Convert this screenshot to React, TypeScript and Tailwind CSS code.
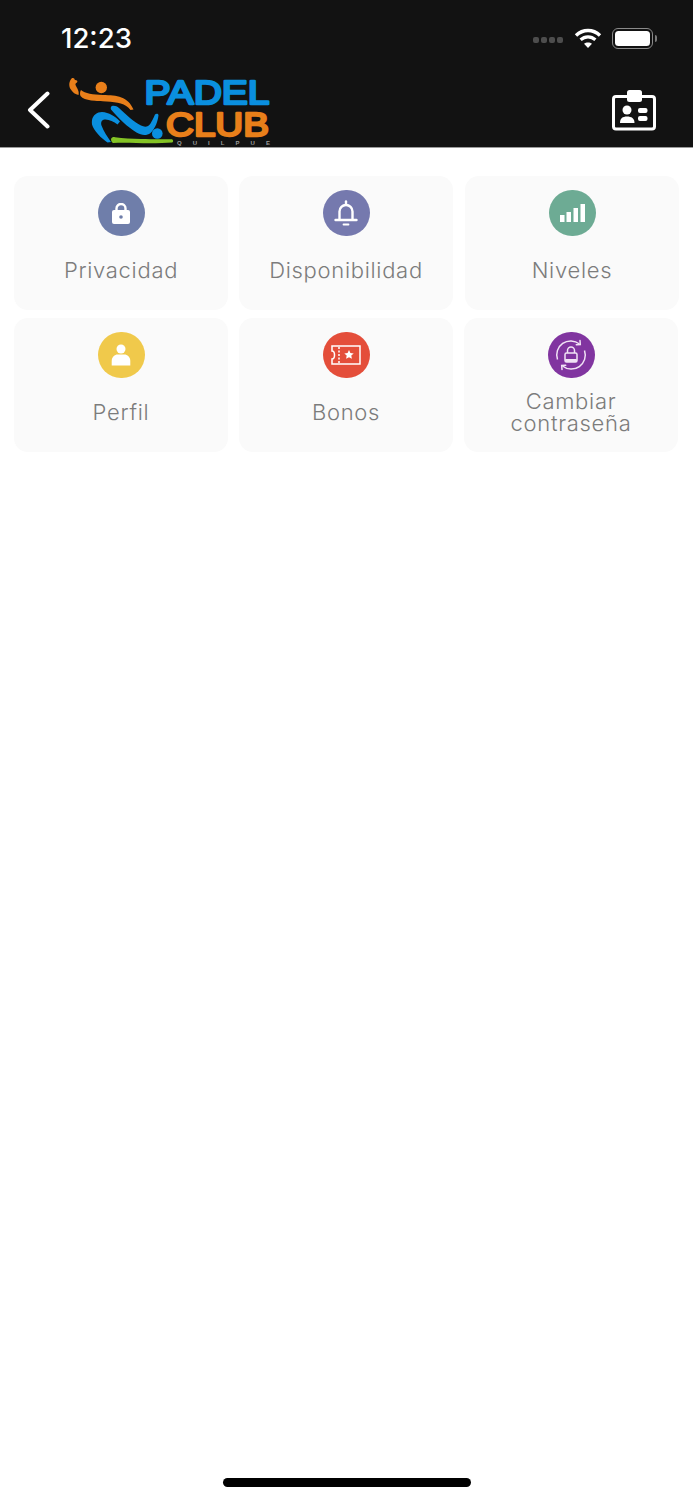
import type { ReactNode } from "react";

function Wifi() {
  return (
    <svg width="28" height="22" viewBox="0 0 28 22" fill="none" stroke="#fff" strokeLinecap="butt">
      <path d="M2 8.500C9 1.800 19 1.800 26 8.500" strokeWidth="3.400" />
      <path d="M6.600 12.800C11 8.800 17 8.800 21.400 12.800" strokeWidth="3.200" />
      <path d="M14 21l-4-4.200c2.200-1.900 5.800-1.900 8 0z" fill="#fff" stroke="none" />
    </svg>
  );
}

function Battery() {
  return (
    <div className="flex items-center gap-[2px]">
      <div className="flex h-[21px] w-[41px] rounded-[6px] border border-[#8a8a8a] p-[2px]">
        <div className="flex-1 rounded-[3.5px] bg-white" />
      </div>
      <div className="h-[7px] w-[2px] rounded-r-sm bg-[#7a7a7a]" />
    </div>
  );
}

function StatusBar() {
  return (
    <div className="flex h-[76px] items-start justify-between pl-[61px] pr-[36px] pt-[17px]">
      <span className="font-['Inter',sans-serif] text-[27.500px] leading-[42px] font-medium text-white">12:23</span>
      <div className="flex items-center pt-[10px]">
        <div className="mt-[3px] mr-[11px] flex gap-[2px]">
          {[0, 1, 2, 3].map((i) => (
            <div key={i} className="h-[6px] w-[6px] rounded-[2px] bg-[#4d4d4d]" />
          ))}
        </div>
        <Wifi />
        <div className="ml-[10px]">
          <Battery />
        </div>
      </div>
    </div>
  );
}

function Logo() {
  return (
    <svg className="overflow-visible" width="210" height="70" viewBox="65 76 210 70" fontFamily="'Liberation Sans', sans-serif">
      <path d="M72 78c2-.5 3 .7 2.700 2 2-.2 3.500 1 2.300 2.500-1.300.6-2.200 1.500-1 3.500 1.300 2.500 3.500 5.500 2.500 9-3-.5-6-2.500-8-6-2-3.500-1.500-8 1.500-11z" fill="#e97f1a" />
      <circle cx="101.300" cy="87.500" r="5.700" fill="#e97f1a" />
      <path d="M81 90c4 3.500 12 4.700 22 5 14 .2 25 1.500 30.500 14.500l-3 .5c-5-6.500-13-8-24-8.500-10-.5-22-.5-26-5.500-.8-2-.5-4.500.5-6z" fill="#e97f1a" />
      <path d="M112 106c3-.5 5 .5 7 2 7 6.500 15 14 22 17.500 4 2 7 1.500 9.500-2 1.800-3 3-5.500 4.500-9 1.500-1.300 3-1 3.500.5-.5 5.500-3 13.500-8 18-4 3-9 2.500-14-.5-9-5.500-18-14-25.500-23-.5-1.500-.3-3 1-3.500z" fill="#0a8fdf" />
      <path d="M92 120c1-5 5-8 10-8 7 .5 13 4 18 9.500l-2.500 3c-4-3-9-5.500-13-5-3 .5-4 3-3 6 2 6 6 11 9.500 16.500l-3.500 .5c-6-4-14-12-15.500-18-.2-1.500-.2-3 0-4.500z" fill="#0a8fdf" />
      <circle cx="157.300" cy="133.500" r="5.300" fill="#0a8fdf" />
      <path d="M111 139c1-2 2.500-2.300 4-1.800 8 1 17 1.500 26 1.800 10 .3 22 .2 31 .2 1.500 1 1.500 2.500.3 3.300-10 .8-24 1-36 .5-8-.3-16-.5-23.300 0-1.500-1-2-2.500-2-4z" fill="#84c325" />
      <text x="144.500" y="103.800" fill="#0a8fdf" stroke="#0a8fdf" strokeWidth="2.400" strokeLinejoin="round" fontSize="33.500" textLength="125" lengthAdjust="spacingAndGlyphs">PADEL</text>
      <text x="166" y="135.800" fill="#e97f1a" stroke="#e97f1a" strokeWidth="2.400" strokeLinejoin="round" fontSize="33.500" textLength="103" lengthAdjust="spacingAndGlyphs">CLUB</text>
      <text x="177" y="144.500" fill="#9a9a9a" fontSize="6" fontWeight="700" textLength="93">QUILPUE</text>
    </svg>
  );
}

function Badge() {
  return (
    <svg width="44" height="41" viewBox="0 0 44 41" fill="#fff">
      <rect x="1.500" y="6.500" width="41" height="32.500" rx="2.500" fill="none" stroke="#fff" strokeWidth="3" />
      <rect x="15" y="0" width="15" height="12" rx="2.500" />
      <circle cx="15" cy="20" r="4.500" />
      <path d="M8 33c0-4.500 2.500-6.500 7-6.500s7.500 2 7.500 6.500z" />
      <rect x="26" y="18" width="9.500" height="5" rx="2" />
      <rect x="26" y="26" width="9.500" height="5" rx="2" />
    </svg>
  );
}

function Header() {
  return (
    <div className="h-[148px] border-b border-[#9a9a9a] bg-[#121212]">
      <StatusBar />
      <div className="flex items-start pl-[27px] pr-[37px]">
        <svg className="mt-[15px]" width="23" height="38" viewBox="0 0 23 38" fill="none" stroke="#fff" strokeWidth="4" strokeLinecap="round" strokeLinejoin="round">
          <path d="M20.500 2.500L3 19l17.500 16.500" />
        </svg>
        <div className="ml-[15px]">
          <Logo />
        </div>
        <div className="mt-[14px] ml-auto">
          <Badge />
        </div>
      </div>
    </div>
  );
}

const lockIcon = (
  <svg width="18" height="21" viewBox="0 0 18 21">
    <path fill="none" stroke="#fff" strokeWidth="2.400" d="M4.500 8V5.500a4.500 4.500 0 0 1 9 0V8" />
    <rect x="0" y="7" width="18" height="14" rx="2" fill="#fff" />
    <circle cx="9" cy="14" r="1.800" fill="#6f7eaa" />
  </svg>
);

const bellIcon = (
  <svg width="26" height="26" viewBox="0 0 26 26" fill="none" stroke="#fff" strokeWidth="2.400">
    <path d="M13 1.500v3" strokeLinecap="round" />
    <path d="M6.500 19.500v-8a6.500 6.500 0 0 1 13 0v8" />
    <path d="M2.500 20h21" strokeLinecap="round" />
    <path d="M10.500 24.500h5" strokeLinecap="round" strokeWidth="1.800" />
  </svg>
);

const barsIcon = (
  <svg width="25" height="18" viewBox="0 0 25 18" fill="#fff">
    <rect x="0" y="11" width="4.500" height="7" />
    <rect x="6.500" y="8" width="4.500" height="10" />
    <rect x="13.500" y="4" width="4.500" height="14" />
    <rect x="20.500" y="0" width="4.500" height="18" />
  </svg>
);

const personIcon = (
  <svg width="20" height="22" viewBox="0 0 20 22" fill="#fff">
    <circle cx="10" cy="5" r="4.500" />
    <path d="M.7 21.500v-4.500c0-4 3-6.500 6-6.500h6.600c3 0 6 2.500 6 6.500v4.500z" />
  </svg>
);

const ticketIcon = (
  <svg width="30" height="20" viewBox="0 0 30 20" fill="none" stroke="#fff" strokeWidth="1.500">
    <path d="M1 1h28v18H1v-5c1.500 0 2.500-1.800 2.500-4S2.500 6 1 6z" />
    <path d="M8 2v16" strokeDasharray="2 1.500" />
    <path d="M18 5l1.400 3 3.300.4-2.400 2.200.6 3.200-2.900-1.600-2.900 1.600.6-3.200-2.400-2.200 3.300-.4z" fill="#fff" stroke="none" />
  </svg>
);

const changeLockIcon = (
  <svg width="32" height="32" viewBox="0 0 32 32" fill="none" stroke="#f1e3f5" strokeWidth="1.500">
    <path d="M2.500 20.500A14 14 0 0 1 24.500 5" />
    <path d="M29.500 11.500A14 14 0 0 1 7.500 27" />
    <path d="M25 1.500l.3 4-4 .3" strokeLinecap="round" />
    <path d="M7 30.500l-.3-4 4-.3" strokeLinecap="round" />
    <rect x="10" y="14" width="12" height="9" rx="1.500" />
    <path d="M12.500 14v-2.500a3.500 3.500 0 0 1 7 0V14" />
    <rect x="10" y="20" width="12" height="3" fill="#f1e3f5" stroke="none" rx="1" />
  </svg>
);

function Card({ icon, color, label, className = "" }: { icon: ReactNode; color: string; label: string; className?: string }) {
  return (
    <div className={`flex h-[134px] w-[214px] flex-col items-center rounded-[14px] bg-[#fafafa] pt-[14px] ${className}`}>
      <div className={`flex h-[46px] w-[47px] items-center justify-center rounded-full ${color}`}>{icon}</div>
      <div className="flex h-[67px] w-[170px] items-center justify-center text-center font-['Inter',sans-serif] text-[22px] leading-[22px] font-light tracking-[0.7px] text-[#7c7c7c]">
        {label}
      </div>
    </div>
  );
}

export default function App() {
  return (
    <div className="flex min-h-[1500px] flex-col bg-white">
      <Header />
      <div className="flex flex-col gap-[8px] pl-[14px] pt-[28px]">
        <div className="flex gap-[11px]">
          <Card icon={lockIcon} color="bg-[#6f7eaa]" label="Privacidad" />
          <Card icon={bellIcon} color="bg-[#7579ae]" label="Disponibilidad" />
          <Card icon={barsIcon} color="bg-[#6dab94]" label="Niveles" className="ml-px" />
        </div>
        <div className="flex gap-[11px]">
          <Card icon={personIcon} color="bg-[#f0c94b]" label="Perfil" />
          <Card icon={ticketIcon} color="bg-[#e44e3a]" label="Bonos" />
          <Card icon={changeLockIcon} color="bg-[#8135a0]" label="Cambiar contraseña" />
        </div>
      </div>
      <div className="mt-auto flex justify-center pb-[13px]">
        <div className="h-[9px] w-[248px] rounded-full bg-black" />
      </div>
    </div>
  );
}
